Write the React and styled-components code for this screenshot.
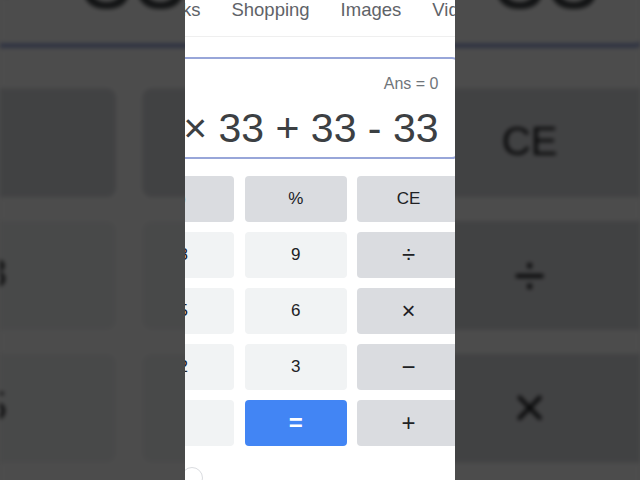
import React from 'react';
import styled, { createGlobalStyle } from 'styled-components';

const Global = createGlobalStyle`
  html, body { margin: 0; padding: 0; background: #4d4d4d; }
  body { font-family: "Liberation Sans", Arial, sans-serif; }
`;

const Stage = styled.div`
  width: 640px;
  height: 480px;
  overflow: hidden;
  display: grid;
  grid-template: 480px / 640px;
  background: #4d4d4d;
`;

const Backdrop = styled.div`
  grid-area: 1 / 1;
  overflow: hidden;
  display: flex;
  align-items: center;
`;

const BackdropScaler = styled.div`
  flex: none;
  transform-origin: 0 50%;
  transform: scale(2.3704);
  filter: blur(0.8px) brightness(0.3);
`;

const Foreground = styled.div`
  grid-area: 1 / 1;
  justify-self: center;
  width: 270px;
  height: 480px;
  position: relative;
  z-index: 1;
`;

const Screen = styled.div`
  width: 270px;
  height: 480px;
  overflow: hidden;
  background: #ffffff;
  display: flex;
  flex-direction: column;
  font-family: "Liberation Sans", Arial, sans-serif;
`;

const TabStrip = styled.div`
  height: 36px;
  border-bottom: 1px solid #efefef;
  flex: none;
`;

const Tabs = styled.div`
  display: flex;
  gap: 31px;
  margin-left: -36px;
  white-space: nowrap;
`;

const Tab = styled.span`
  font-size: 18.5px;
  line-height: 20px;
  color: #5f6368;
`;

const Calc = styled.div`
  flex: none;
  align-self: flex-start;
  width: 440px;
  margin-left: -165.5px;
  margin-top: 20px;
  display: flex;
  flex-direction: column;
`;

const Display = styled.div`
  box-sizing: border-box;
  height: 102px;
  border: 2px solid #98a6d9;
  border-radius: 8px;
  padding: 16px 19px 0 0;
  display: flex;
  flex-direction: column;
  align-items: flex-end;
  overflow: hidden;
`;

const Ans = styled.div`
  font-size: 16px;
  line-height: 18px;
  color: #70757a;
`;

const Expression = styled.div`
  margin-top: 12px;
  font-size: 41px;
  line-height: 46px;
  color: #3c4043;
  white-space: nowrap;
`;

const Keys = styled.div`
  margin-top: 17px;
  display: grid;
  grid-template-columns: repeat(4, 102px);
  grid-auto-rows: 45.5px;
  column-gap: 10.67px;
  row-gap: 10.5px;
`;

const toneBg = { op: '#dadce0', num: '#f1f3f4', eq: '#4285f4' };

const Key = styled.div`
  border-radius: 4px;
  background: ${(p) => toneBg[p.$tone]};
  color: ${(p) => (p.$tone === 'eq' ? '#ffffff' : '#202124')};
  font-size: ${(p) => (p.$symbol ? '24px' : '17px')};
  font-weight: ${(p) => (p.$tone === 'eq' ? 700 : 400)};
  line-height: 1;
  display: flex;
  align-items: center;
  justify-content: center;
`;

const Footer = styled.div`
  flex: none;
  margin-top: 21px;
  margin-left: -4px;
`;

const Ring = styled.div`
  width: 22px;
  height: 22px;
  box-sizing: border-box;
  border: 1.5px solid #dadce0;
  border-radius: 50%;
`;

const keys = [
  ['(', 'op'], [')', 'op'], ['%', 'op'], ['CE', 'op'],
  ['7', 'num'], ['8', 'num'], ['9', 'num'], ['÷', 'op', true],
  ['4', 'num'], ['5', 'num'], ['6', 'num'], ['×', 'op', true],
  ['1', 'num'], ['2', 'num'], ['3', 'num'], ['−', 'op', true],
  ['0', 'num'], ['.', 'num'], ['=', 'eq', true], ['+', 'op', true],
];

function Calculator() {
  return (
    <Screen>
      <TabStrip>
        <Tabs>
          <Tab>Books</Tab>
          <Tab>Shopping</Tab>
          <Tab>Images</Tab>
          <Tab>Videos</Tab>
        </Tabs>
      </TabStrip>
      <Calc>
        <Display>
          <Ans>Ans = 0</Ans>
          <Expression>33 × 33 + 33 - 33</Expression>
        </Display>
        <Keys>
          {keys.map(([label, tone, symbol], i) => (
            <Key key={i} $tone={tone} $symbol={symbol}>{label}</Key>
          ))}
        </Keys>
      </Calc>
      <Footer>
        <Ring />
      </Footer>
    </Screen>
  );
}

export default function App() {
  return (
    <>
      <Global />
      <Stage>
        <Backdrop aria-hidden="true">
          <BackdropScaler>
            <Calculator />
          </BackdropScaler>
        </Backdrop>
        <Foreground>
          <Calculator />
        </Foreground>
      </Stage>
    </>
  );
}
